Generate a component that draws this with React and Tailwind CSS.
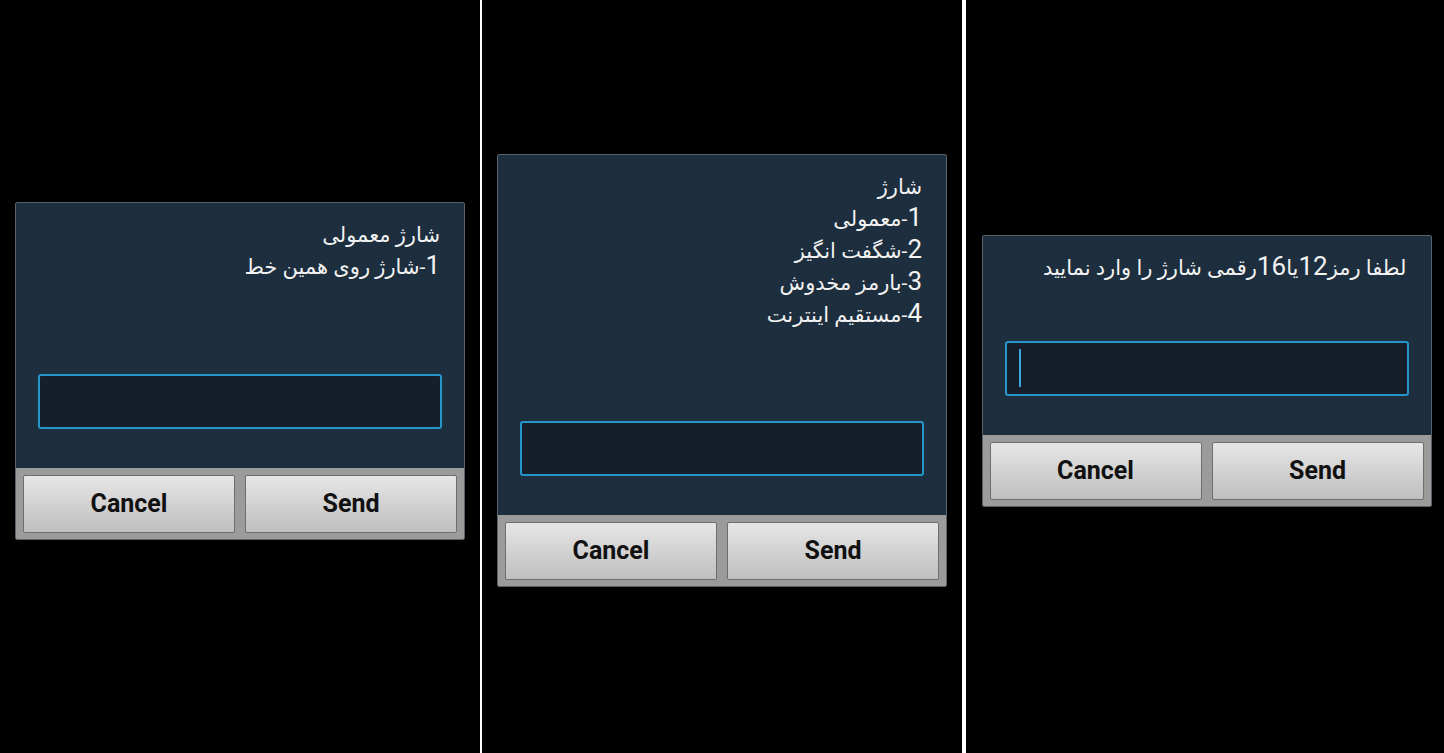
import React from "react";

const FONT = { fontFamily: "Roboto, 'DejaVu Sans', sans-serif" };

const Num = ({ children }) => <span className="text-[26px] leading-none">{children}</span>;

const Dialog = ({ lines, msgHeight, cursor }) => (
  <div className="w-[450px] rounded-[2px] border border-[#59626a] bg-[#1d2e3e] overflow-hidden">
    <div
      dir="rtl"
      className={`${msgHeight} pt-[16px] pr-[24px] text-[21px] leading-[32px] text-[#f2f2f2]`}
    >
      {lines.map((l, i) => (
        <div key={i} className="h-[32px]">{l}</div>
      ))}
    </div>
    <div className="mx-[22px] h-[55px] rounded-[3px] border-2 border-[#2596c9] bg-[#151e29] flex items-center pl-[12px]">
      {cursor && <div className="w-[2px] h-[38px] bg-[#3ba7dd]" />}
    </div>
    <div className="h-[39px]" />
    <div className="bg-[#9b9b9b] px-[7px] pt-[7px] pb-[6px] flex gap-[10px]">
      {["Cancel", "Send"].map((b) => (
        <button
          key={b}
          className="flex-1 h-[58px] rounded-[2px] border border-[#6e6e6e] bg-gradient-to-b from-[#e6e6e6] to-[#bfbfbf] text-[25px] font-bold text-[#111]"
        >
          {b}
        </button>
      ))}
    </div>
  </div>
);

export default function App() {
  return (
    <div className="w-[1444px] h-[753px] bg-black flex" style={FONT}>
      <div className="w-[480px] flex items-center justify-center pb-[12px]">
        <Dialog
          msgHeight="h-[171px]"
          lines={[
            "شارژ معمولی",
            <>
              <Num>1</Num>-شارژ روی همین خط
            </>,
          ]}
        />
      </div>
      <div className="w-[2px] bg-white" />
      <div className="w-[480px] flex items-center justify-center pb-[12px]">
        <Dialog
          msgHeight="h-[266px]"
          lines={[
            "شارژ",
            <>
              <Num>1</Num>-معمولی
            </>,
            <>
              <Num>2</Num>-شگفت انگیز
            </>,
            <>
              <Num>3</Num>-بارمز مخدوش
            </>,
            <>
              <Num>4</Num>-مستقیم اینترنت
            </>,
          ]}
        />
      </div>
      <div className="w-[4px] bg-white" />
      <div className="flex-1 flex items-center justify-center pb-[12px] pl-[3px]">
        <Dialog
          msgHeight="h-[105px]"
          cursor
          lines={[
            <>
              لطفا رمز<Num>12</Num>یا<Num>16</Num>رقمی شارژ را وارد نمایید
            </>,
          ]}
        />
      </div>
    </div>
  );
}
